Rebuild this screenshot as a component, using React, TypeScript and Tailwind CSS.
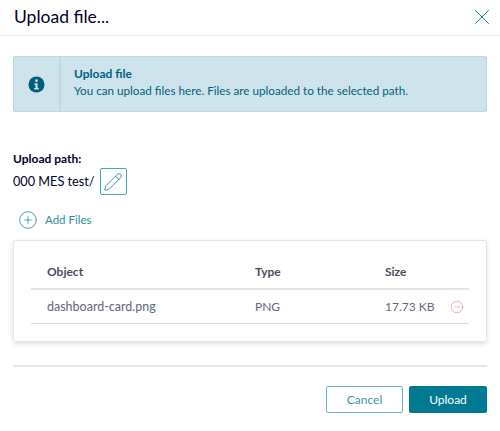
import { CirclePlus, CircleMinus, Pencil, X } from 'lucide-react';

export default function App() {
  return (
    <div className="w-[500px] h-[431px] bg-white font-['Lato',sans-serif] text-[12px] text-[#000028] overflow-hidden">
      {/* Header */}
      <div className="h-[36px] flex items-center justify-between pl-[14px] pr-[5px] border-b border-[#ebebee]">
        <h1 className="text-[17.5px] leading-[24px] mb-[2px]">Upload file...</h1>
        <X className="w-[26px] h-[26px] text-[#0b7a94] mb-[1px]" strokeWidth={0.9} />
      </div>

      <div className="px-[13px] pt-[20px]">
        {/* Info banner */}
        <div className="h-[56px] flex bg-[#cde4ed] border border-[#bcd8e3] rounded-[2px]">
          <div className="w-[47px] flex items-center justify-center border-r-2 border-[#bcd8e3]">
            <svg viewBox="0 0 18 18" className="w-[17px] h-[17px]">
              <circle cx="9" cy="9" r="8.5" fill="#005f7f" />
              <circle cx="9" cy="5" r="1.5" fill="#cde4ed" />
              <path d="M6.8 7.6h3.4v5h1.2v1.6H6.6v-1.6h1.3V9.2H6.8z" fill="#cde4ed" />
            </svg>
          </div>
          <div className="pl-[13px] pt-[9px] text-[#00617f] leading-[16px] text-[11.7px]">
            <div className="font-bold text-[12px]">Upload file</div>
            <div>You can upload files here. Files are uploaded to the selected path.</div>
          </div>
        </div>

        {/* Upload path */}
        <div className="mt-[39px] font-bold leading-[16px]">Upload path:</div>
        <div className="flex items-center mt-[1px] h-[27px]">
          <span className="text-[12.7px]">000 MES test/</span>
          <button className="ml-[5px] w-[27px] h-[27px] flex items-center justify-center border border-[#4ba3b8] rounded-[2px] text-[#2f8ea6]">
            <Pencil className="w-[20px] h-[20px]" strokeWidth={1.1} />
          </button>
        </div>

        {/* Add files */}
        <div className="flex items-center mt-[15px] ml-[5px] h-[20px] text-[#2f8ea6]">
          <CirclePlus className="w-[20px] h-[20px]" strokeWidth={1} />
          <span className="ml-[7px] text-[11.5px]">Add Files</span>
        </div>

        {/* File table */}
        <div className="mt-[10px] h-[102px] px-[17px] pt-[14px] border border-[#e6e6e9] rounded-[2px] shadow-[0_2px_5px_rgba(0,0,40,0.12)]">
          <div className="grid grid-cols-[208px_130px_1fr] h-[35px] items-center pl-[16px] font-bold text-[#4c4c5e] border-b-2 border-[#e6e6e9]">
            <span>Object</span>
            <span>Type</span>
            <span>Size</span>
          </div>
          <div className="grid grid-cols-[208px_130px_1fr] h-[34px] items-center pl-[16px] pt-[1px] text-[#66667e] border-b border-[#d9d9de]">
            <span className="text-[12.5px]">dashboard-card.png</span>
            <span>PNG</span>
            <span className="flex items-center justify-between pr-[5px]">
              17.73 KB
              <CircleMinus className="w-[14px] h-[14px] text-[#f08a96]" strokeWidth={1.2} />
            </span>
          </div>
        </div>

        {/* Footer */}
        <div className="mt-[23px] border-t-2 border-[#e6e6e9]" />
        <div className="flex justify-end gap-[6px] mt-[19px]">
          <button className="w-[77px] h-[27px] border border-[#6fb4c4] rounded-[2px] text-[#3a93aa]">Cancel</button>
          <button className="w-[78px] h-[27px] bg-[#007993] rounded-[2px] text-white">Upload</button>
        </div>
      </div>
    </div>
  );
}
